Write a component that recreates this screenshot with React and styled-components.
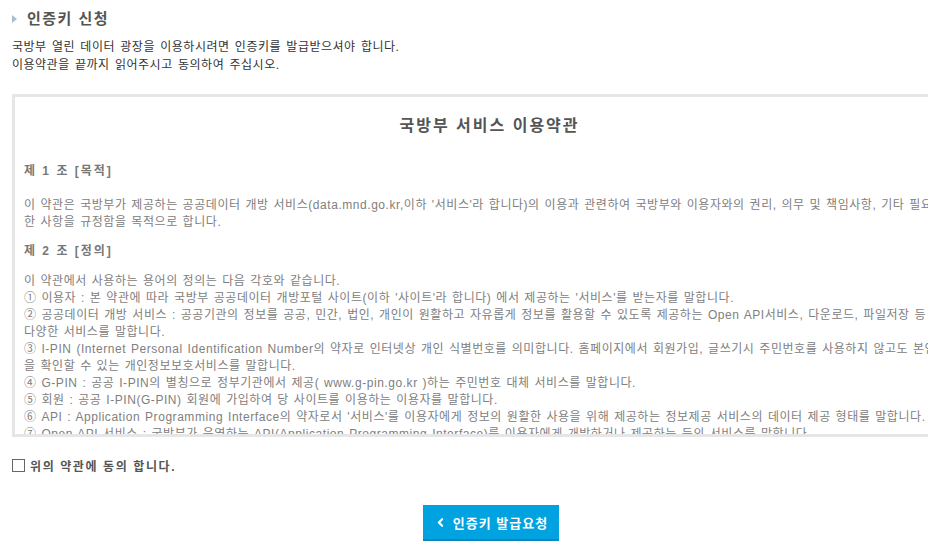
import React from 'react';
import styled, { createGlobalStyle } from 'styled-components';
import { ChevronLeft } from 'lucide-react';

const GlobalStyle = createGlobalStyle`
    html, body {
        margin: 0;
        padding: 0;
        background: #fff;
        overflow: hidden;
        font-family: "Liberation Sans", "Noto Sans CJK KR", sans-serif;
    }
`;

const Page = styled.div`
    width: 946px;
    padding: 9px 0 0 12px;
`;

const Heading = styled.h2`
    display: flex;
    align-items: center;
    gap: 10px;
    margin: 0;
    font-size: 15px;
    line-height: 20px;
    font-weight: bold;
    color: #555;
    letter-spacing: 1.5px;
`;

const Bullet = styled.span`
    width: 0;
    height: 0;
    border-top: 4px solid transparent;
    border-bottom: 4px solid transparent;
    border-left: 5px solid #a9bccf;
`;

const Intro = styled.p`
    margin: 9px 0 0;
    font-size: 12px;
    line-height: 18px;
    color: #333;
    letter-spacing: 0.5px;
    word-spacing: 1.5px;
`;

const TermsBox = styled.div`
    box-sizing: border-box;
    margin-top: 20px;
    height: 343px;
    border: 3px solid #e6e6e6;
    padding: 17px 0 0 9px;
    overflow: hidden;
`;

const TermsTitle = styled.h3`
    margin: 0 0 25px;
    text-align: center;
    font-size: 16px;
    line-height: 24px;
    font-weight: bold;
    color: #555;
    letter-spacing: 2px;
`;

const Article = styled.h4`
    margin: ${(p) => p.$top || 0}px 0 0;
    font-size: 12px;
    line-height: 17px;
    font-weight: bold;
    color: #777;
    letter-spacing: 2px;
`;

const Para = styled.p`
    margin: ${(p) => p.$top}px 0 0;
    font-size: 12px;
    line-height: 17px;
    color: #808080;
    letter-spacing: 0.55px;
    word-spacing: 1px;
    white-space: nowrap;
`;

const AgreeRow = styled.label`
    display: flex;
    align-items: center;
    gap: 5px;
    margin-top: 18px;
    height: 20px;
    font-size: 12px;
    font-weight: bold;
    color: #555;
    letter-spacing: 1.6px;
`;

const Check = styled.span`
    box-sizing: border-box;
    width: 13px;
    height: 13px;
    border: 1px solid #666;
    background: #fff;
`;

const ButtonBar = styled.div`
    display: flex;
    justify-content: center;
    padding-left: 12px;
    margin-top: 30px;
`;

const RequestButton = styled.button`
    display: flex;
    align-items: center;
    gap: 6px;
    height: 36px;
    padding: 0 11px 0 11px;
    border: 0;
    border-bottom: 2px solid #0b87bd;
    background: #00a2df;
    box-shadow: 0 3px 0 #e2e2e2;
    color: #fff;
    font-family: inherit;
    font-size: 13px;
    font-weight: bold;
    letter-spacing: 1px;
`;

export default function App() {
    return (
        <Page>
            <GlobalStyle />
            <Heading>
                <Bullet />
                인증키 신청
            </Heading>
            <Intro>
                국방부 열린 데이터 광장을 이용하시려면 인증키를 발급받으셔야 합니다.<br />
                이용약관을 끝까지 읽어주시고 동의하여 주십시오.
            </Intro>

            <TermsBox>
                <TermsTitle>국방부 서비스 이용약관</TermsTitle>

                <Article>제 1 조 [목적]</Article>
                <Para $top={17}>
                    이 약관은 국방부가 제공하는 공공데이터 개방 서비스(data.mnd.go.kr,이하 '서비스'라 합니다)의 이용과 관련하여 국방부와 이용자와의 권리, 의무 및 책임사항, 기타 필요<br />
                    한 사항을 규정함을 목적으로 합니다.
                </Para>

                <Article $top={12}>제 2 조 [정의]</Article>
                <Para $top={13}>
                    이 약관에서 사용하는 용어의 정의는 다음 각호와 같습니다.<br />
                    ① 이용자 : 본 약관에 따라 국방부 공공데이터 개방포털 사이트(이하 '사이트'라 합니다) 에서 제공하는 '서비스'를 받는자를 말합니다.<br />
                    ② 공공데이터 개방 서비스 : 공공기관의 정보를 공공, 민간, 법인, 개인이 원활하고 자유롭게 정보를 활용할 수 있도록 제공하는 Open API서비스, 다운로드, 파일저장 등<br />
                    다양한 서비스를 말합니다.<br />
                    ③ I-PIN (Internet Personal Identification Number의 약자로 인터넷상 개인 식별번호를 의미합니다. 홈페이지에서 회원가입, 글쓰기시 주민번호를 사용하지 않고도 본인임<br />
                    을 확인할 수 있는 개인정보보호서비스를 말합니다.<br />
                    ④ G-PIN : 공공 I-PIN의 별칭으로 정부기관에서 제공( www.g-pin.go.kr )하는 주민번호 대체 서비스를 말합니다.<br />
                    ⑤ 회원 : 공공 I-PIN(G-PIN) 회원에 가입하여 당 사이트를 이용하는 이용자를 말합니다.<br />
                    ⑥ API : Application Programming Interface의 약자로서 '서비스'를 이용자에게 정보의 원활한 사용을 위해 제공하는 정보제공 서비스의 데이터 제공 형태를 말합니다.<br />
                    ⑦ Open API 서비스 : 국방부가 운영하는 API(Application Programming Interface)를 이용자에게 개방하거나 제공하는 등의 서비스를 말합니다.
                </Para>
            </TermsBox>

            <AgreeRow>
                <Check />
                위의 약관에 동의 합니다.
            </AgreeRow>

            <ButtonBar>
                <RequestButton>
                    <ChevronLeft size={13} strokeWidth={4} />
                    인증키 발급요청
                </RequestButton>
            </ButtonBar>
        </Page>
    );
}
